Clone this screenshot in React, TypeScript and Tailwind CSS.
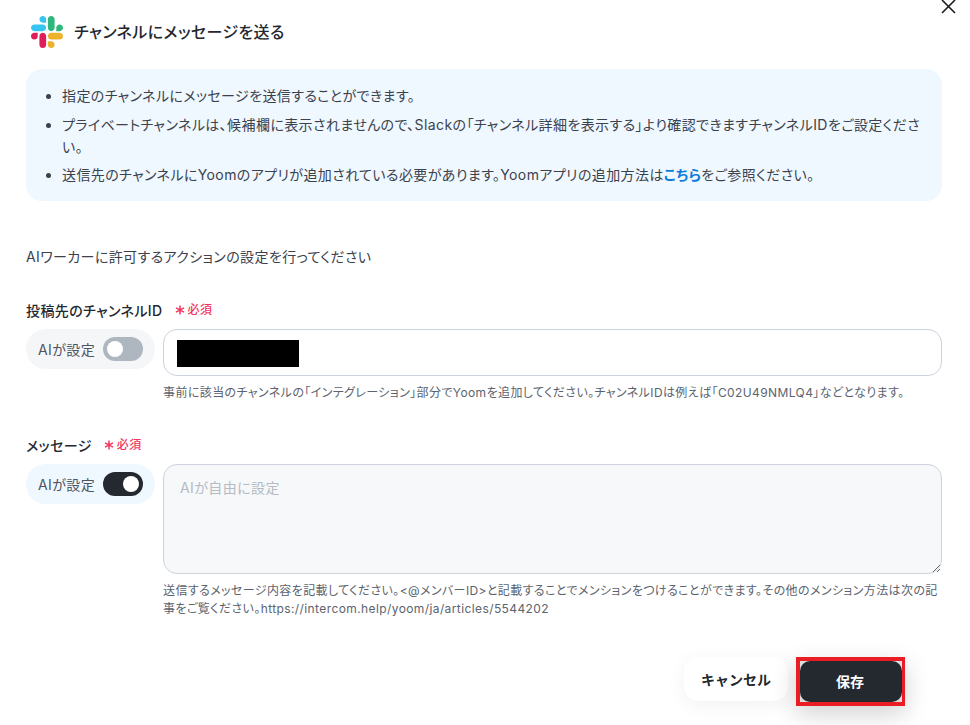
import { useState } from "react";

const font = "font-['Inter','Noto_Sans_CJK_JP',sans-serif]";

function SlackLogo() {
  return (
    <svg width="32" height="32" viewBox="0 0 122.8 122.8">
      <path d="M25.8 77.6c0 7.1-5.8 12.9-12.9 12.9S0 84.7 0 77.6s5.8-12.9 12.9-12.9h12.9v12.9zm6.5 0c0-7.1 5.8-12.9 12.9-12.9s12.9 5.8 12.9 12.9v32.3c0 7.1-5.8 12.9-12.9 12.9s-12.9-5.8-12.9-12.9V77.6z" fill="#e01e5a" />
      <path d="M45.2 25.8c-7.1 0-12.9-5.8-12.9-12.9S38.1 0 45.2 0s12.9 5.8 12.9 12.9v12.9H45.2zm0 6.5c7.1 0 12.9 5.8 12.9 12.9s-5.8 12.9-12.9 12.9H12.9C5.8 58.1 0 52.3 0 45.2s5.8-12.9 12.9-12.9h32.3z" fill="#36c5f0" />
      <path d="M97 45.2c0-7.1 5.8-12.9 12.9-12.9s12.9 5.8 12.9 12.9-5.8 12.9-12.9 12.9H97V45.2zm-6.5 0c0 7.1-5.8 12.9-12.9 12.9s-12.9-5.8-12.9-12.9V12.9C64.7 5.8 70.5 0 77.6 0s12.9 5.8 12.9 12.9v32.3z" fill="#2eb67d" />
      <path d="M77.6 97c7.1 0 12.9 5.8 12.9 12.9s-5.8 12.9-12.9 12.9-12.9-5.8-12.9-12.9V97h12.9zm0-6.5c-7.1 0-12.9-5.8-12.9-12.9s5.8-12.9 12.9-12.9h32.3c7.1 0 12.9 5.8 12.9 12.9s-5.8 12.9-12.9 12.9H77.6z" fill="#ecb22e" />
    </svg>
  );
}

function Required() {
  return (
    <span className="flex items-center gap-[3px] text-[12px] font-medium text-[#f2365f]">
      <svg width="10" height="10" viewBox="0 0 10 10" stroke="#f2365f" strokeWidth="1.5" fill="none">
        <path d="M5 0.5V9.5M1 2.8L9 7.2M9 2.8L1 7.2" />
      </svg>
      必須
    </span>
  );
}

function AiToggle({ on, onToggle }: { on: boolean; onToggle: () => void }) {
  return (
    <div
      className={`flex h-10 w-[129px] shrink-0 items-center justify-between rounded-full pl-3 pr-3 ${
        on ? "bg-[#eff7ff]" : "bg-[#f5f6f8]"
      }`}
    >
      <span className="text-[14px] text-[#4d5561]">AIが設定</span>
      <button
        onClick={onToggle}
        className={`flex h-6 w-10 items-center rounded-full p-[4px] ${
          on ? "justify-end bg-[#24282f]" : "justify-start bg-[#aeb6bf]"
        }`}
      >
        <span className="h-4 w-4 rounded-full bg-white" />
      </button>
    </div>
  );
}

export default function App() {
  const [channelAi, setChannelAi] = useState(false);
  const [messageAi, setMessageAi] = useState(true);

  return (
    <div className={`relative h-[725px] w-[970px] overflow-hidden bg-white pl-[26px] pr-7 tracking-wide [font-feature-settings:'palt'] ${font}`}>
      {/* CLOSE */}
      <button className="absolute right-[13px] top-[-2px] text-[#1d1d1f]">
        <svg width="18" height="18" viewBox="0 0 18 18" stroke="currentColor" strokeWidth="1.6" fill="none">
          <path d="M3 2L16 15M16 2L3 15" />
        </svg>
      </button>

      {/* HEADER */}
      <div className="flex h-[69px] items-center gap-[11px] pb-[5px] pl-[5px]">
        <SlackLogo />
        <h1 className="text-[16px] font-medium text-[#24282f]">チャンネルにメッセージを送る</h1>
      </div>

      {/* INFO */}
      <ul className="flex h-[132px] list-disc flex-col gap-[6.5px] rounded-2xl bg-[#eff7ff] pl-9 pr-4 pt-[16px] text-[14px] leading-[22px] text-[#3b424c]">
        <li>指定のチャンネルにメッセージを送信することができます。</li>
        <li>
          プライベートチャンネルは、候補欄に表示されませんので、Slackの「チャンネル詳細を表示する」より確認できますチャンネルIDをご設定ください。
        </li>
        <li>
          送信先のチャンネルにYoomのアプリが追加されている必要があります。Yoomアプリの追加方法は
          <a className="font-semibold text-[#0b7bdc]">こちら</a>
          をご参照ください。
        </li>
      </ul>

      <p className="mt-[46px] text-[14px] leading-5 text-[#3b424c]">AIワーカーに許可するアクションの設定を行ってください</p>

      {/* CHANNEL ID */}
      <div className="mt-[33px] flex h-5 items-center gap-3">
        <span className="text-[14px] font-medium text-[#24282f]">投稿先のチャンネルID</span>
        <Required />
      </div>
      <div className="mt-[9px] flex gap-2">
        <AiToggle on={channelAi} onToggle={() => setChannelAi(!channelAi)} />
        <div className="flex h-[47px] flex-1 items-center rounded-[14px] border border-[#ccd3dc] bg-white pl-[13px] pt-[2px]">
          <div className="h-[27px] w-[122px] bg-black" />
        </div>
      </div>
      <p className="ml-[137px] mt-[8px] text-[12px] leading-[18px] text-[#5b636e]">
        事前に該当のチャンネルの「インテグレーション」部分でYoomを追加してください。チャンネルIDは例えば「C02U49NMLQ4」などとなります。
      </p>

      {/* MESSAGE */}
      <div className="mt-[33px] flex h-5 items-center gap-3">
        <span className="text-[14px] font-medium text-[#24282f]">メッセージ</span>
        <Required />
      </div>
      <div className="mt-[9px] flex gap-2">
        <AiToggle on={messageAi} onToggle={() => setMessageAi(!messageAi)} />
        <textarea
          readOnly
          placeholder="AIが自由に設定"
          className="h-[110px] flex-1 rounded-[14px] border border-[#ccd3dc] bg-[#f6f8fa] px-4 py-[13px] text-[14px] leading-5 outline-none placeholder:text-[#b4bbc4]"
        />
      </div>
      <p className="ml-[137px] mt-[8px] text-[12px] leading-[18px] text-[#5b636e]">
        送信するメッセージ内容を記載してください。&lt;@メンバーID&gt;と記載することでメンションをつけることができます。その他のメンション方法は次の記事をご覧ください。https://intercom.help/yoom/ja/articles/5544202
      </p>

      {/* FOOTER */}
      <div className="mt-[39px] flex items-start justify-end gap-[8px] pr-[37px]">
        <button className="h-11 w-[104px] rounded-[14px] bg-white text-[14px] font-semibold tracking-normal text-[#24282f] shadow-[0_4px_20px_rgba(0,0,0,0.06)] [font-feature-settings:normal]">
          キャンセル
        </button>
        <div className="flex h-[49px] w-[109px] items-center justify-center border-4 border-r-[3px] border-[#ea1c24] bg-[#ddd] shadow-[0_8px_24px_rgba(0,0,0,0.18)]">
          <button className="h-full w-full rounded-[10px] bg-[#24282f] pr-[2px] text-[14px] font-semibold tracking-normal text-white [font-feature-settings:normal]">保存</button>
        </div>
      </div>
    </div>
  );
}
